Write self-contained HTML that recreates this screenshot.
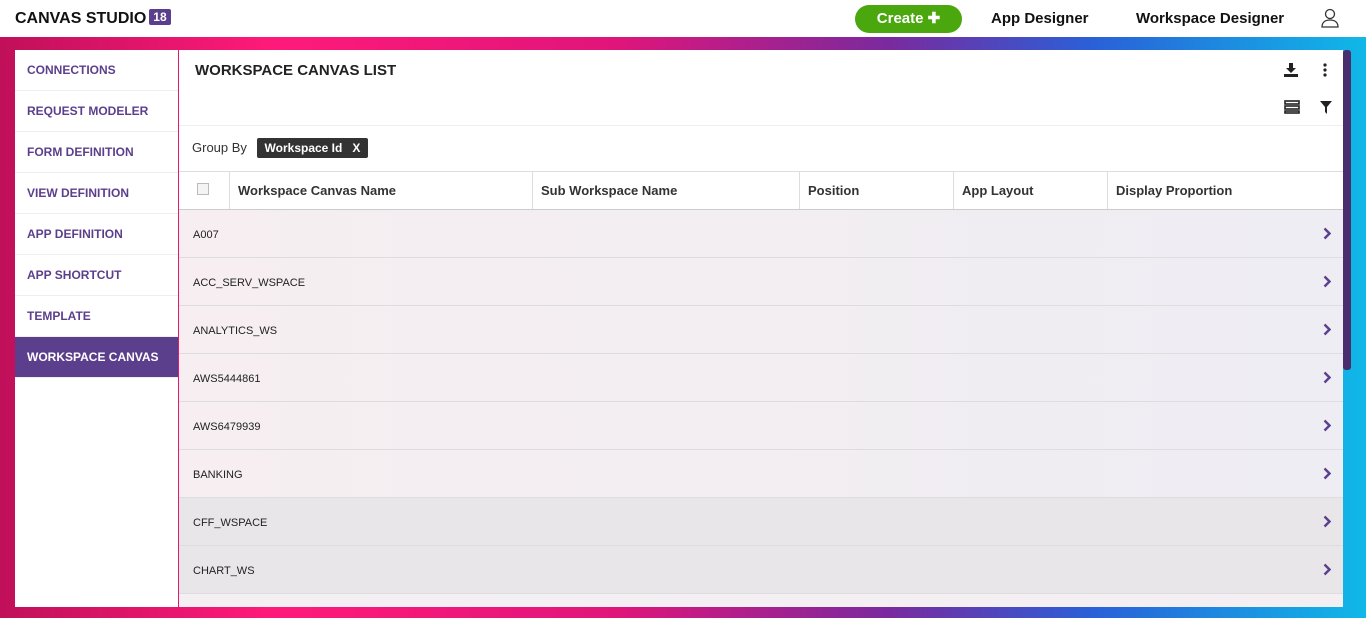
<!DOCTYPE html><html><head><style>
*{margin:0;padding:0;box-sizing:border-box}
body{width:1366px;height:618px;overflow:hidden;font-family:"Liberation Sans",sans-serif;background:#fff;position:relative}
.top{height:37px;background:#fff;position:relative}
.logo{position:absolute;left:15px;top:9px;font-weight:bold;font-size:16px;color:#111}
.badge{display:inline-block;background:#5c3f8c;color:#fff;font-size:12px;padding:1px 4px;margin-left:3px;border-radius:2px;vertical-align:2px}
.create{position:absolute;left:855px;top:5px;width:107px;height:28px;background:#4aa80e;border-radius:14px;color:#fff;font-weight:bold;font-size:15px;text-align:center;line-height:28px}
.nav{position:absolute;top:10px;font-weight:bold;font-size:15px;color:#111}
.bg{position:absolute;left:0;top:37px;width:1366px;height:581px;background:linear-gradient(90deg,#c0105a 0%,#ff1a7a 20%,#e0157a 45%,#7a2a9e 65%,#2a60d8 80%,#10b8e8 100%)}
.side{position:absolute;left:15px;top:50px;width:163px;height:557px;background:#fff}
.side div{height:41px;border-bottom:1px solid #eee;padding:13px 12px;font-size:12px;font-weight:bold;color:#5c3f8c}
.side div.act{background:#5c3f8c;color:#fff}
.main{position:absolute;left:179px;top:50px;width:1164px;height:557px;background:#f3eff2}
.title{height:40px;background:#fff;box-shadow:0 2px 3px rgba(0,0,0,.08);padding:12px 16px;font-size:15px;font-weight:bold;color:#222;position:relative}
.tb{height:36px;background:#fff;border-bottom:1px solid #eee;position:relative}
.grp{height:45px;background:#fff;padding:12px 13px;font-size:13px;color:#333}
.chip{display:inline-block;background:#333;color:#fff;font-size:12px;font-weight:bold;padding:3px 8px;border-radius:2px;margin-left:6px}
.hdr{height:39px;background:#fff;border-top:1px solid #ddd;border-bottom:1px solid #ccc;display:flex;font-size:13px;font-weight:bold;color:#333}
.hdr div{border-right:1px solid #ddd;padding:11px 8px}
.row{height:48px;border-bottom:1px solid #ddd;padding:19px 14px;font-size:11px;color:#222;position:relative;background:linear-gradient(90deg,#f6eef1,#eeedf3)}
.row svg{position:absolute;right:12px;top:17px}
.sb{position:absolute;left:1343px;top:50px;width:8px;height:320px;background:#4a2d6e;border-radius:3px}
</style></head><body>
<div class="top">
<div class="logo">CANVAS STUDIO<span class="badge">18</span></div>
<div class="create">Create ✚</div>
<div class="nav" style="left:991px">App Designer</div>
<div class="nav" style="left:1136px">Workspace Designer</div>
<svg style="position:absolute;left:1321px;top:8px" width="18" height="20" viewBox="0 0 18 20" fill="none" stroke="#333" stroke-width="1.3"><circle cx="9" cy="6" r="4.5"/><path d="M1 19c0-5 3.5-7 8-7s8 2 8 7z"/></svg>
</div>
<div class="bg"></div>
<div class="side">
<div>CONNECTIONS</div><div>REQUEST MODELER</div><div>FORM DEFINITION</div><div>VIEW DEFINITION</div><div>APP DEFINITION</div><div>APP SHORTCUT</div><div>TEMPLATE</div><div class="act">WORKSPACE CANVAS</div>
</div>
<div class="main">
<div class="title">WORKSPACE CANVAS LIST
<svg style="position:absolute;left:1105px;top:13px" width="14" height="14" viewBox="0 0 14 14" fill="#222"><path d="M5 0h4v5h3l-5 5-5-5h3z"/><rect x="0" y="11" width="14" height="3"/></svg>
<svg style="position:absolute;left:1144px;top:13px" width="4" height="14" fill="#222"><circle cx="2" cy="2" r="1.6"/><circle cx="2" cy="7" r="1.6"/><circle cx="2" cy="12" r="1.6"/></svg>
</div>
<div class="tb">
<svg style="position:absolute;left:1105px;top:10px" width="16" height="14" fill="none" stroke="#222" stroke-width="1.6"><rect x="1" y="1" width="14" height="3"/><rect x="1" y="6" width="14" height="3"/><rect x="1" y="11" width="14" height="2"/></svg>
<svg style="position:absolute;left:1141px;top:11px" width="12" height="13" fill="#222"><path d="M0 0h12L7 6v7L5 11V6z"/></svg>
</div>
<div class="grp">Group By <span class="chip">Workspace Id &nbsp; X</span></div>
<div class="hdr"><div style="width:51px;padding:11px 18px"><span style="display:inline-block;width:12px;height:12px;border:1px solid #bbb;background:#f4f4f4"></span></div><div style="width:303px">Workspace Canvas Name</div><div style="width:267px">Sub Workspace Name</div><div style="width:154px">Position</div><div style="width:154px">App Layout</div><div style="width:235px;border:0">Display Proportion</div></div>
<div class="row">A007<svg width="8" height="13"><path d="M1.5 1.5l5 5-5 5" fill="none" stroke="#5c3f8c" stroke-width="2.4"/></svg></div>
<div class="row">ACC_SERV_WSPACE<svg width="8" height="13"><path d="M1.5 1.5l5 5-5 5" fill="none" stroke="#5c3f8c" stroke-width="2.4"/></svg></div>
<div class="row">ANALYTICS_WS<svg width="8" height="13"><path d="M1.5 1.5l5 5-5 5" fill="none" stroke="#5c3f8c" stroke-width="2.4"/></svg></div>
<div class="row">AWS5444861<svg width="8" height="13"><path d="M1.5 1.5l5 5-5 5" fill="none" stroke="#5c3f8c" stroke-width="2.4"/></svg></div>
<div class="row">AWS6479939<svg width="8" height="13"><path d="M1.5 1.5l5 5-5 5" fill="none" stroke="#5c3f8c" stroke-width="2.4"/></svg></div>
<div class="row">BANKING<svg width="8" height="13"><path d="M1.5 1.5l5 5-5 5" fill="none" stroke="#5c3f8c" stroke-width="2.4"/></svg></div>
<div class="row" style="background:#e9e6ea">CFF_WSPACE<svg width="8" height="13"><path d="M1.5 1.5l5 5-5 5" fill="none" stroke="#5c3f8c" stroke-width="2.4"/></svg></div>
<div class="row" style="background:#e9e6ea">CHART_WS<svg width="8" height="13"><path d="M1.5 1.5l5 5-5 5" fill="none" stroke="#5c3f8c" stroke-width="2.4"/></svg></div>
</div>
<div class="sb"></div>
</body></html>
